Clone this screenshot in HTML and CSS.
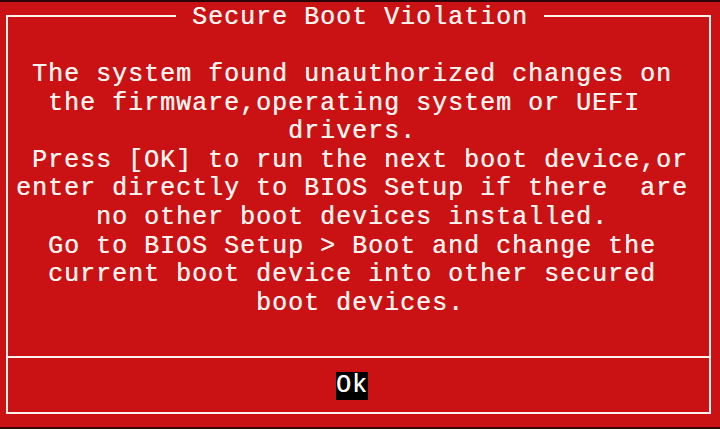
FILE: index.html
```html
<!DOCTYPE html>
<html>
<head>
<meta charset="utf-8">
<link rel="stylesheet" href="styles.css">
</head>
<body>
<div class="screen">
  <div class="frame">
    <div class="title">Secure Boot Violation</div>
    <pre class="message">  The system found unauthorized changes on
   the firmware,operating system or UEFI
                  drivers.
  Press [OK] to run the next boot device,or
 enter directly to BIOS Setup if there  are
      no other boot devices installed.
   Go to BIOS Setup &gt; Boot and change the
   current boot device into other secured
                boot devices.</pre>
    <div class="footer">
      <div class="ok">Ok</div>
    </div>
  </div>
</div>
</body>
</html>
```
FILE: styles.css
```css
html, body {
  margin: 0;
  padding: 0;
  background: #c91114;
}
.screen {
  width: 720px;
  height: 429px;
  overflow: hidden;
  background: #ca1114;
  box-shadow: inset 0 2px 0 #2a0303, inset 0 -2px 0 #3a0505;
  padding-top: 15px;
  box-sizing: border-box;
  font-family: "Liberation Mono", monospace;
  font-size: 25px;
  letter-spacing: 1px;
  color: #fff6f2;
  text-shadow: 0.4px 0 0 rgba(255, 246, 242, 0.7);
}
.frame {
  margin-left: 6px;
  width: 705px;
  box-sizing: border-box;
  border: 2px solid #fff2ec;
}
.title {
  width: max-content;
  margin: -13px 0 0 168px;
  padding: 0 16px;
  line-height: 28.6px;
  background: #ca1114;
}
.message {
  margin: 28.4px 0 0 -8px;
  font: inherit;
  line-height: 28.6px;
  white-space: pre;
}
.footer {
  margin-top: 37.6px;
  border-top: 2px solid #fff2ec;
  padding: 14px 0 12px 328px;
}
.ok {
  width: 32px;
  height: 28px;
  line-height: 28px;
  background: #000;
  color: #ffffff;
  white-space: pre;
  overflow: hidden;
}
```
